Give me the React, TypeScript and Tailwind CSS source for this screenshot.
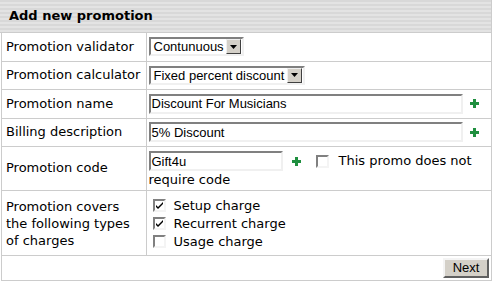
import React from "react";

function Select({ value, width }: { value: string; width: string }) {
  return (
    <div
      className={`flex h-[19px] items-center border-2 border-t-[#808080] border-l-[#808080] border-b-[#f0f0f0] border-r-[#f0f0f0] bg-white ${width}`}
    >
      <span className="flex-1 pl-[3px] font-['Liberation_Sans',Arial,sans-serif] text-[13px] leading-none text-black">
        {value}
      </span>
      <span className="mr-[1px] flex h-[15px] w-[15px] items-center justify-center border border-t-[#f0f0f0] border-l-[#f0f0f0] border-b-[#404040] border-r-[#404040] bg-[#d4d0c8]">
        <svg width="7" height="4" viewBox="0 0 7 4">
          <path d="M0 0h7L3.5 4z" fill="#000" />
        </svg>
      </span>
    </div>
  );
}

function TextInput({ value, width }: { value: string; width: string }) {
  return (
    <div
      className={`flex h-[20px] items-center border-2 border-t-[#808080] border-l-[#808080] border-b-[#f0f0f0] border-r-[#f0f0f0] bg-white pl-[1px] font-['Liberation_Sans',Arial,sans-serif] text-[13px] leading-none text-black ${width}`}
    >
      {value}
    </div>
  );
}

function Plus() {
  return (
    <svg width="9" height="9" viewBox="0 0 9 9" className="shrink-0">
      <path d="M3 0h3v3h3v3H6v3H3V6H0V3h3z" fill="#1f8f3f" />
    </svg>
  );
}

function Checkbox({ checked }: { checked?: boolean }) {
  return (
    <span className="flex h-[13px] w-[13px] shrink-0 items-center justify-center border-2 border-t-[#808080] border-l-[#808080] border-b-[#f4f4f4] border-r-[#f4f4f4] bg-white">
      {checked && (
        <svg width="7" height="7" viewBox="0 0 7 7">
          <path d="M0 3l2 2 5-5v2L2 7 0 5z" fill="#000" />
        </svg>
      )}
    </span>
  );
}

export default function App() {
  const label = "border-b border-r border-[#cccccc] pl-[4px] align-middle";
  const cell = "border-b border-[#cccccc] pl-[2px] align-middle";

  return (
    <main className="min-h-screen bg-white font-['DejaVu_Sans',Verdana,sans-serif] text-[13px] text-black">
      <div className="ml-[1px] w-[491px] border-x border-b border-[#cccccc]">
        {/* HEADER */}
        <div className="-ml-[2px] flex h-[33px] items-center border-b border-[#cccccc] bg-[repeating-linear-gradient(180deg,#d8d8d8_0px,#d8d8d8_2px,#e3e3e3_2px,#e3e3e3_4px)] pl-[9px] text-[13px] font-bold">
          Add new promotion
        </div>

        <table className="w-full border-collapse">
          <tbody>
            <tr className="h-[28px]">
              <td className={`${label} w-[144px]`}>Promotion validator</td>
              <td className={cell}>
                <Select value="Contunuous" width="w-[95px]" />
              </td>
            </tr>
            <tr className="h-[28px]">
              <td className={label}>Promotion calculator</td>
              <td className={cell}>
                <Select value="Fixed percent discount" width="w-[156px]" />
              </td>
            </tr>
            <tr className="h-[29px]">
              <td className={label}>Promotion name</td>
              <td className={cell}>
                <div className="flex items-center gap-[7px]">
                  <TextInput value="Discount For Musicians" width="w-[314px]" />
                  <Plus />
                </div>
              </td>
            </tr>
            <tr className="h-[28px]">
              <td className={label}>Billing description</td>
              <td className={cell}>
                <div className="flex items-center gap-[7px]">
                  <TextInput value="5% Discount" width="w-[314px]" />
                  <Plus />
                </div>
              </td>
            </tr>
            <tr className="h-[44px]">
              <td className={label}>Promotion code</td>
              <td className={`${cell} pt-[4px]`}>
                <div className="flex items-center">
                  <TextInput value="Gift4u" width="w-[134px]" />
                  <span className="ml-[9px]">
                    <Plus />
                  </span>
                  <span className="ml-[15px]">
                    <Checkbox />
                  </span>
                  <span className="ml-[10px]">This promo does not</span>
                </div>
                <div className="leading-[18px]">require code</div>
              </td>
            </tr>
            <tr className="h-[65px]">
              <td className={`${label} pt-[1px] leading-[17px]`}>
                Promotion covers
                <br />
                the following types
                <br />
                of charges
              </td>
              <td className={`${cell} pl-[6px] pt-[2px]`}>
                <div className="flex flex-col gap-[5px]">
                  <div className="flex items-center gap-[8px] leading-[13px]">
                    <Checkbox checked />
                    Setup charge
                  </div>
                  <div className="flex items-center gap-[8px] leading-[13px]">
                    <Checkbox checked />
                    Recurrent charge
                  </div>
                  <div className="flex items-center gap-[8px] leading-[13px]">
                    <Checkbox />
                    Usage charge
                  </div>
                </div>
              </td>
            </tr>
            <tr className="h-[25px]">
              <td colSpan={2} className="pr-[2px] text-right align-middle">
                <button className="inline-flex h-[20px] w-[46px] items-center justify-center border-2 border-t-[#f4f4f4] border-l-[#f4f4f4] border-b-[#606060] border-r-[#606060] bg-[#d4d0c8] font-['Liberation_Sans',Arial,sans-serif] text-[13px] leading-none">
                  Next
                </button>
              </td>
            </tr>
          </tbody>
        </table>
      </div>
    </main>
  );
}
